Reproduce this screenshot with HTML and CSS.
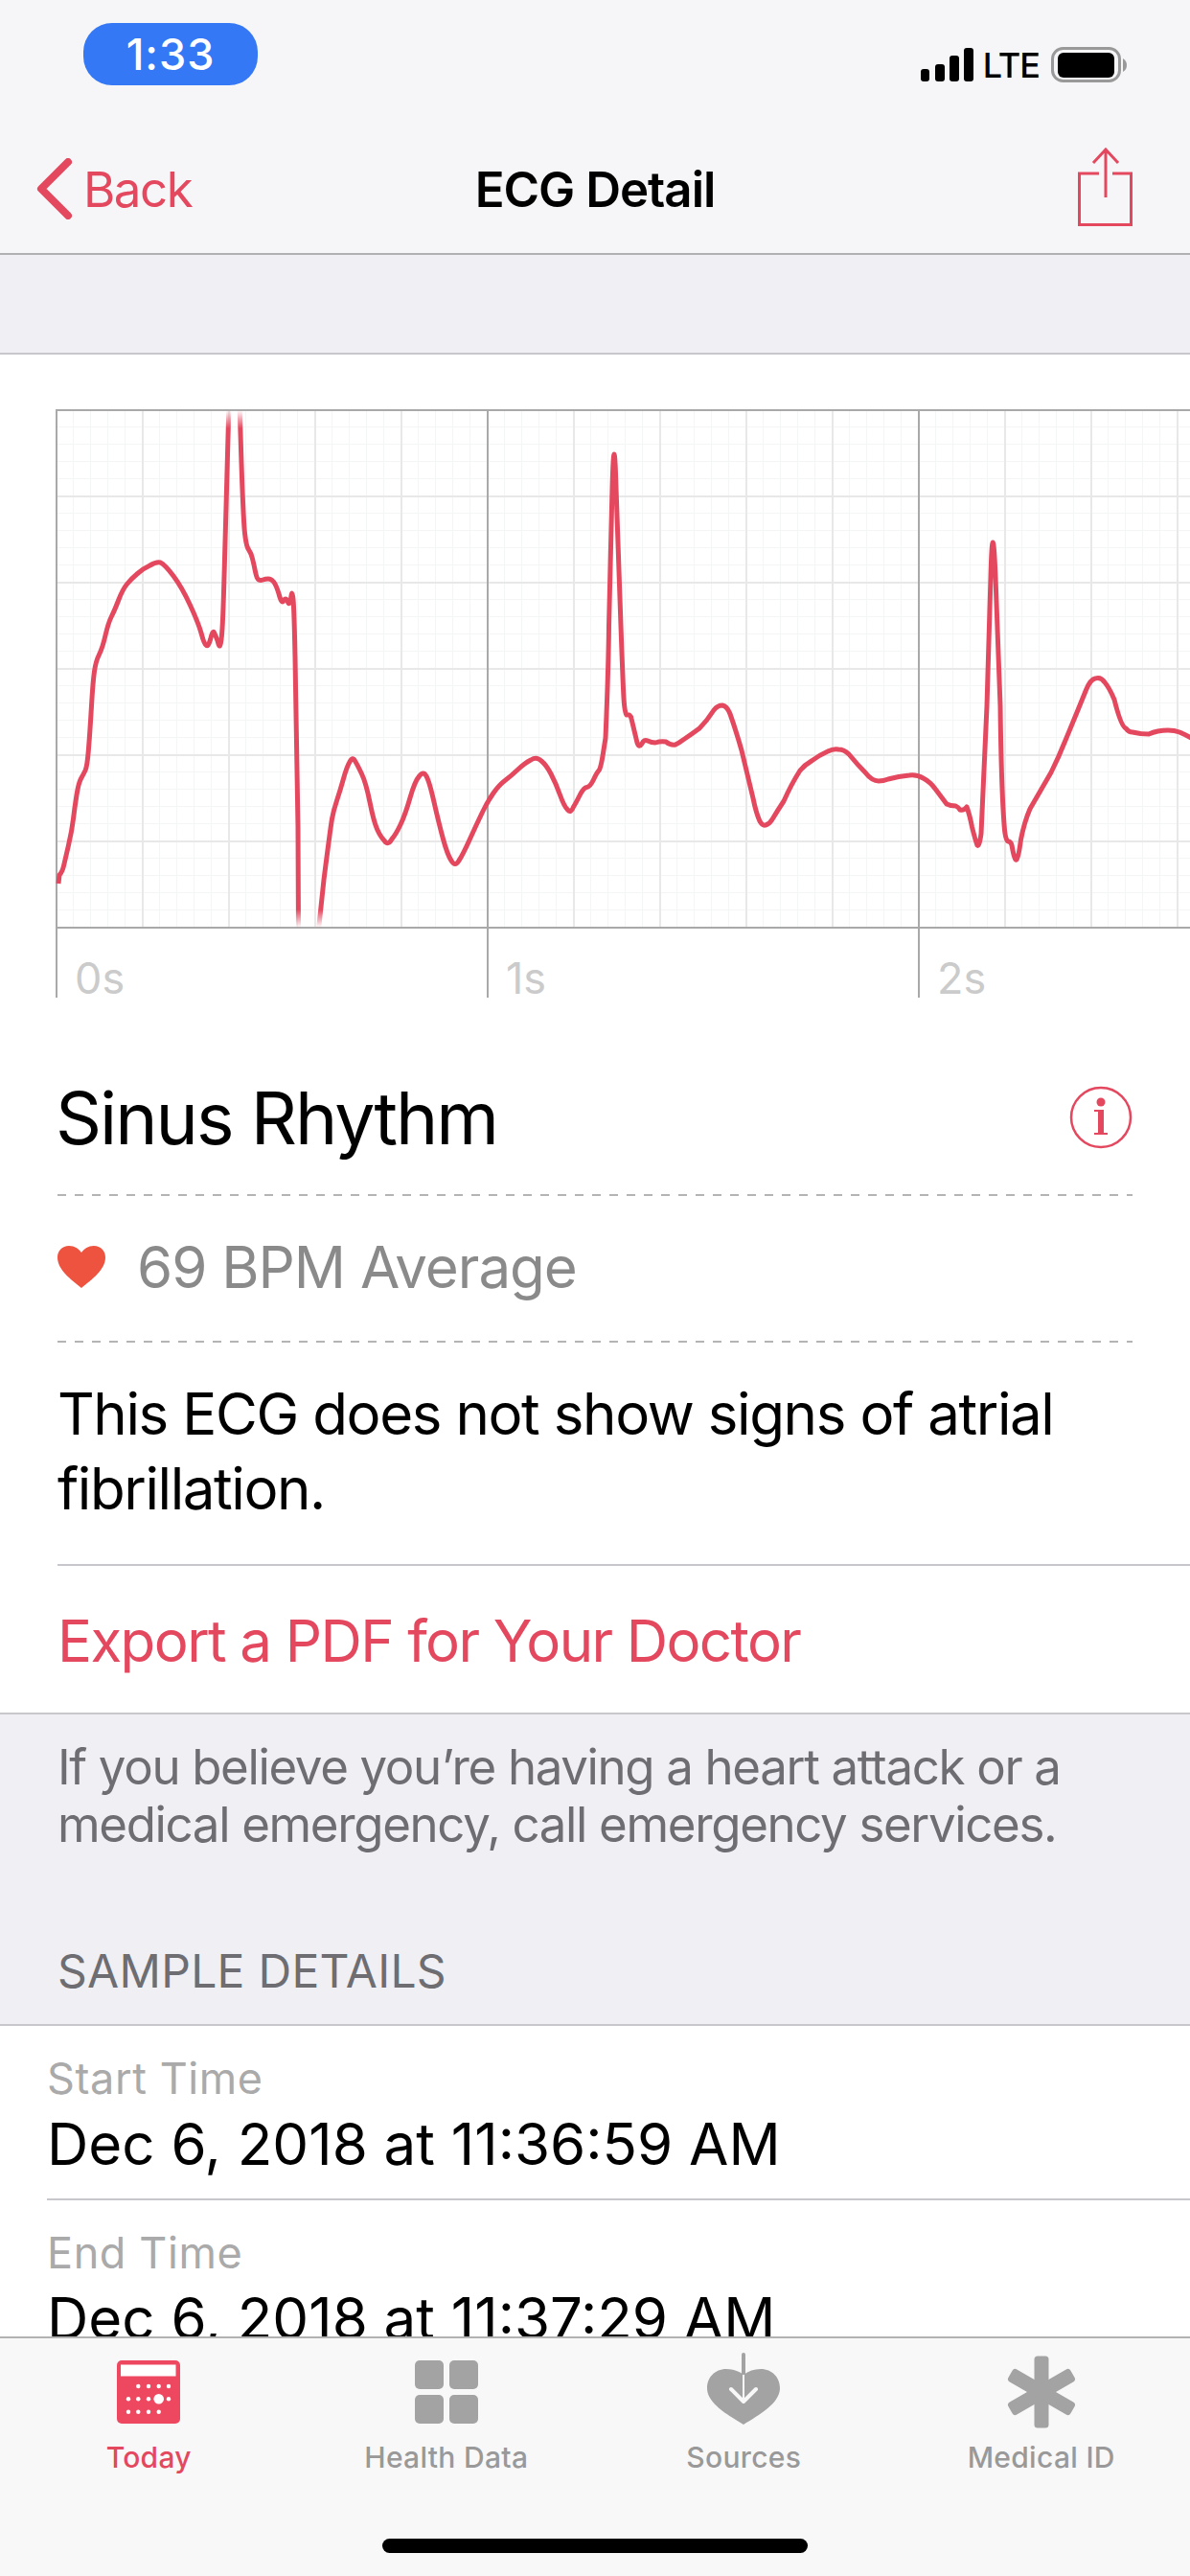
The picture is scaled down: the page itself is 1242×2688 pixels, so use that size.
FILE: index.html
```html
<!DOCTYPE html>
<html lang="en">
<head>
    <meta charset="UTF-8">
    <meta name="viewport" content="width=device-width, initial-scale=1.0">
    <link rel="stylesheet" href="styles.css">
    <title>ECG Detail</title>
</head>
<body>
    <div class="screen">
        <header class="top">
            <div class="status">
                <div class="time-pill">1:33</div>
                <div class="status-right">
                    <svg class="signal" width="55" height="35" viewBox="0 0 55 35">
                        <rect x="0" y="22" width="9" height="13" rx="3"/>
                        <rect x="15" y="17" width="10" height="18" rx="3"/>
                        <rect x="30" y="8" width="10" height="27" rx="3"/>
                        <rect x="45" y="0" width="10" height="35" rx="3"/>
                    </svg>
                    <span class="lte">LTE</span>
                    <svg class="battery" width="80" height="37" viewBox="0 0 80 37">
                        <rect x="1.5" y="1.5" width="70" height="34" rx="11" fill="none" stroke="#999" stroke-width="3"/>
                        <rect x="7" y="6" width="59" height="26" rx="6" fill="#000"/>
                        <path d="M75 12c3 2 4 4 4 7s-1 5-4 7z" fill="#999"/>
                    </svg>
                </div>
            </div>
            <nav class="nav">
                <a class="back">
                    <svg width="38" height="64" viewBox="0 0 38 64">
                        <path d="M33 4 5 32l28 28" fill="none" stroke="#e4485f" stroke-width="8" stroke-linecap="round" stroke-linejoin="round"/>
                    </svg>
                    <span>Back</span>
                </a>
                <div class="nav-title">ECG Detail</div>
                <svg class="share" width="57" height="82" viewBox="0 0 57 82">
                    <path d="M22 27H1.5v53.5h54V27H36" fill="none" stroke="#e4485f" stroke-width="3"/>
                    <path d="M29 2v50M16 16 29 2l13 14" fill="none" stroke="#e4485f" stroke-width="3"/>
                </svg>
            </nav>
        </header>
        <div class="band"></div>

        <section class="card">
            <div class="chart">
                <div class="plot">
                    <svg class="trace" width="1184" height="542" viewBox="58 427 1184 542">
                        <defs>
                            <linearGradient id="edgeFade" gradientUnits="userSpaceOnUse" x1="0" y1="428" x2="0" y2="968">
                                <stop offset="0" stop-color="#000"/>
                                <stop offset="0.035" stop-color="#fff"/>
                                <stop offset="0.965" stop-color="#fff"/>
                                <stop offset="1" stop-color="#000"/>
                            </linearGradient>
                            <mask id="edgeMask" maskUnits="userSpaceOnUse" x="58" y="427" width="1184" height="542">
                                <rect x="58" y="427" width="1184" height="542" fill="url(#edgeFade)"/>
                            </mask>
                        </defs>
                        <g mask="url(#edgeMask)" fill="none" stroke="#e4485f" stroke-width="5" stroke-linejoin="round" stroke-linecap="butt">
                            <path d="M61,922 L62,913 Q65,910 66.5,903.5 Q68,897 71.5,882 Q75,867 76.5,854.5 Q78,842 80,829.5 Q82,817 84.5,812.5 Q87,808 89,804 Q91,800 92.5,781 Q94,762 95.5,736.5 Q97,711 98.5,700.5 Q100,690 103.5,683 Q107,676 110,663 Q113,650 116.5,643 Q120,636 124,625.5 Q128,615 132.5,609.5 Q137,604 143.5,598.5 Q150,593 156.5,590 Q163,586 167.5,587 Q172,589 181,601 Q190,613 198.5,631.5 Q207,650 210,660.5 Q213,672 215,673 Q217,676 219.5,667.5 Q222,657 223.5,660 Q225,663 227,668.5 Q229,677 230,672.5 Q231,671 232,655.5 Q233,640 234.5,583 Q236,526 239,420"/>
                            <path d="M250,420 L252,484 Q254,543 255.5,556.5 Q257,570 259.5,573.5 Q262,577 263.5,583 Q265,589 266.5,596.5 Q268,604 270,605 Q272,606 274.5,605 Q277,604 280,604 Q283,604 285.5,607 Q288,610 291,619.5 Q294,631 296,627 Q298,623 300,627 Q302,633 303.5,625 Q305,613 306,625.5 Q307,636 308,686.5 L311,863 L311.5,975"/>
                            <path d="M332,975 L338,918 Q345,863 346.5,854.5 Q348,846 351.5,835.5 Q355,825 358.5,812.5 Q362,800 365,795 Q368,789 370.5,794 Q373,798 377.5,807.5 Q382,817 386,837 Q390,857 393.5,865 Q397,873 401,877 Q405,883 409,875.5 Q413,871 418,860.5 Q423,850 428,832.5 Q433,815 437.5,810 Q442,804 445,810 Q448,815 453,837 Q458,859 462.5,875.5 Q467,892 471,898 Q475,905 479,898 Q483,892 490,876.5 Q497,861 503,848.5 Q509,836 515,827.5 Q521,819 527,814.5 Q533,810 540.5,803 Q548,796 554,793 Q560,789 565,794 Q570,798 575,807.5 Q580,817 584.5,829.5 Q589,842 592.5,845 Q596,849 598.5,842 Q601,838 605,830 Q609,822 612.5,821.5 Q616,821 619.5,813.5 Q623,806 625,804 Q627,802 629.5,786 L632,770 Q635,700 635.5,653 L639,509 Q641,439 643,509 L648,653 Q650,710 651,728 Q652,745 654,746 Q658,745 659,750 L665,775 Q667,781 670,776 Q672,771 676,773 Q680,775 684,775 Q690,773 695,774 Q700,778 705,777 Q709,775 713,772 Q722,766 730,760 Q738,752 745,741 Q749,736 754,736 Q759,737 762,745 Q768,762 774,783 Q780,808 786,833 Q789,848 793,857 Q796,862 799,861 Q803,860 806,855 Q812,845 818,836 Q826,818 835,804 Q840,798 847,794 Q855,788 864,784 Q870,781 875,782 Q881,782 886,787 Q895,798 903,806 Q910,815 917,815 Q922,815 927,813 Q938,810 949,809 Q957,808 963.5,812 Q971,816 976,823 Q982,831 988,839 Q992,841 997.5,841 Q1000,842 1002,845 Q1006,846 1009,842 Q1012,850 1014.5,863 Q1018,877 1020,882 Q1022,884 1024,870 L1030,737 L1034,602 Q1036,530 1039,602 L1044,737 Q1045,820 1048,860 Q1049,876 1052,878 Q1055,878 1056,882 Q1059,899 1061,897 Q1063,895 1065.5,876 Q1069,858 1075,844 Q1086,825 1097,806 Q1105,790 1112,772.5 Q1123,746 1133.5,720 Q1138,709 1143,708 Q1149,706 1153,712 Q1158,718 1163,730 Q1170,758 1175,760 Q1178,764 1182,764 Q1190,766 1199,766 Q1208,762 1219,762 Q1226,762 1231,764 Q1238,767 1245,771"/>
                        </g>
                    </svg>
                </div>
                <div class="ticks">
                    <div class="tick">0s</div>
                    <div class="tick">1s</div>
                    <div class="tick">2s</div>
                </div>
            </div>

            <div class="result">
                <div class="result-row rhythm">
                    <h1>Sinus Rhythm</h1>
                    <svg class="info" width="66" height="66" viewBox="0 0 66 66">
                        <circle cx="33" cy="33" r="31" fill="none" stroke="#e4485f" stroke-width="2.5"/>
                        <g fill="#e4485f">
                            <circle cx="33" cy="17" r="4.5"/>
                            <path d="M26 25h10v24h4v2H26v-2h4V27h-4z"/>
                        </g>
                    </svg>
                </div>
                <div class="result-row bpm">
                    <svg width="50" height="44" viewBox="0 0 50 44">
                        <path d="M25 44C14 35 0 25 0 12 0 5 5 0 12 0c6 0 10 3 13 7 3-4 7-7 13-7 7 0 12 5 12 12 0 13-14 23-25 32z" fill="#ee5340"/>
                    </svg>
                    <span>69 BPM Average</span>
                </div>
                <p class="summary">This ECG does not show signs of atrial fibrillation.</p>
            </div>
            <div class="export"><a>Export a PDF for Your Doctor</a></div>
        </section>

        <p class="note">If you believe you’re having a heart attack or a medical emergency, call emergency services.</p>
        <h2 class="section-title">SAMPLE DETAILS</h2>

        <section class="details">
            <div class="detail">
                <div class="detail-label">Start Time</div>
                <div class="detail-value">Dec 6, 2018 at 11:36:59 AM</div>
            </div>
            <div class="detail">
                <div class="detail-label">End Time</div>
                <div class="detail-value">Dec 6, 2018 at 11:37:29 AM</div>
            </div>
        </section>

        <footer class="tabbar">
            <div class="tabs">
                <a class="tab active">
                    <div class="tab-icon">
                        <svg width="66" height="66" viewBox="0 0 66 66">
                            <rect width="66" height="66" rx="5" fill="#ee4760"/>
                            <rect x="4" y="4.5" width="57.5" height="12" fill="#fff"/>
                            <g fill="#fff">
                                <circle cx="22.3" cy="27" r="2.2"/><circle cx="33" cy="27" r="2.2"/><circle cx="43.7" cy="27" r="2.2"/><circle cx="54" cy="27" r="2.2"/>
                                <circle cx="12" cy="40.3" r="2.2"/><circle cx="22.3" cy="40.3" r="2.2"/><circle cx="33" cy="40.3" r="2.2"/><circle cx="43.7" cy="40.3" r="5.3"/><circle cx="54" cy="40.3" r="2.2"/>
                                <circle cx="12" cy="53.7" r="2.2"/><circle cx="22.3" cy="53.7" r="2.2"/><circle cx="33" cy="53.7" r="2.2"/><circle cx="43.7" cy="53.7" r="2.2"/>
                            </g>
                        </svg>
                    </div>
                    <span>Today</span>
                </a>
                <a class="tab">
                    <div class="tab-icon">
                        <svg width="66" height="66" viewBox="0 0 66 66" fill="#a3a3a3">
                            <rect x="0" y="0" width="30" height="30" rx="5"/>
                            <rect x="36" y="0" width="30" height="30" rx="5"/>
                            <rect x="0" y="36" width="30" height="30" rx="5"/>
                            <rect x="36" y="36" width="30" height="30" rx="5"/>
                        </svg>
                    </div>
                    <span>Health Data</span>
                </a>
                <a class="tab">
                    <div class="tab-icon">
                        <svg width="76" height="82" viewBox="0 0 76 82">
                            <path fill="#a3a3a3" d="M38 23C33 19 27 17 20 17 8 17 0 26 0 37 0 53 22 65 38 75 54 65 76 53 76 37 76 26 68 17 56 17 49 17 43 19 38 23z"/>
                            <rect x="36" y="0" width="4" height="24" rx="2" fill="#a3a3a3"/>
                            <path d="M38 23v28" fill="none" stroke="#f8f8f8" stroke-width="2"/>
                            <path d="M25 38l13 13 13-13" fill="none" stroke="#f8f8f8" stroke-width="4" stroke-linecap="round" stroke-linejoin="round"/>
                        </svg>
                    </div>
                    <span>Sources</span>
                </a>
                <a class="tab">
                    <div class="tab-icon">
                        <svg width="72" height="76" viewBox="-36 -38 72 76" fill="#a3a3a3">
                            <rect x="-7.5" y="-37.5" width="15" height="75" rx="3.5"/>
                            <rect x="-7.5" y="-37.5" width="15" height="75" rx="3.5" transform="rotate(60)"/>
                            <rect x="-7.5" y="-37.5" width="15" height="75" rx="3.5" transform="rotate(-60)"/>
                        </svg>
                    </div>
                    <span>Medical ID</span>
                </a>
            </div>
            <div class="home-bar"></div>
        </footer>
    </div>
</body>
</html>
```

FILE: styles.css
```css
* {
    box-sizing: border-box;
}

body {
    margin: 0;
    font-family: Inter, "Liberation Sans", sans-serif;
    color: #000;
}

h1,
h2,
p {
    margin: 0;
    font-weight: normal;
}

.screen {
    position: relative;
    width: 1242px;
    height: 2688px;
    overflow: hidden;
    background-color: #efeff4;
}

.top {
    height: 266px;
    background-color: #f6f6f8;
    border-bottom: 2px solid #b0b0b2;
}

.status {
    display: flex;
    justify-content: space-between;
    align-items: flex-start;
    padding: 24px 65px 0 87px;
    height: 130px;
}

.time-pill {
    width: 182px;
    height: 65px;
    border-radius: 30px;
    background-color: #3478f6;
    color: white;
    font-size: 45px;
    font-weight: 500;
    letter-spacing: 1px;
    line-height: 65px;
    text-align: center;
}

.status-right {
    display: flex;
    align-items: center;
    height: 37px;
    margin-top: 25px;
}

.signal {
    margin-right: 10px;
}

.battery {
    margin-left: 12px;
}

.lte {
    font-size: 36px;
    font-weight: 500;
    letter-spacing: -1px;
}

.nav {
    display: grid;
    grid-template-columns: 1fr auto 1fr;
    align-items: center;
    padding: 0 38px;
    height: 134px;
}

.back {
    display: flex;
    align-items: center;
    gap: 11px;
    color: #e4485f;
    font-size: 51px;
    letter-spacing: -1.5px;
}

.nav-title {
    font-size: 51px;
    font-weight: 600;
    letter-spacing: -1px;
}

.share {
    justify-self: end;
    margin: -4px 22px 0 0;
}

.band {
    height: 104px;
    border-bottom: 2px solid #c8c8cc;
}

.card {
    background-color: white;
    border-bottom: 2px solid #c8c8cc;
}

.chart {
    padding: 57px 0 0 58px;
}

.plot {
    position: relative;
    height: 542px;
    border-top: 2px solid #a9a9a9;
    border-bottom: 2px solid #a9a9a9;
    background-image:
        linear-gradient(to right, #a9a9a9 2px, transparent 2px),
        linear-gradient(to right, #e8e8e8 2px, transparent 2px),
        linear-gradient(to bottom, #e8e8e8 2px, transparent 2px),
        linear-gradient(to right, #f4f5f5 1px, transparent 1px),
        linear-gradient(to bottom, #f4f5f5 1px, transparent 1px);
    background-size: 450px 100%, 90px 100%, 100% 90px, 18px 100%, 100% 18px;
    background-position: 0 0, 0 0, 0 -2px, 0 0, 0 -2px;
}

.trace {
    position: absolute;
    left: 0;
    top: -2px;
}

.ticks {
    display: flex;
    height: 72px;
}

.tick {
    flex: 0 0 450px;
    border-left: 2px solid #a9a9a9;
    padding: 24px 0 0 18px;
    color: #cbcbcb;
    font-size: 45px;
}

.result {
    padding: 0 60px;
}

.result-row {
    display: flex;
    align-items: center;
    background: linear-gradient(to right, #b4b4b4 50%, transparent 50%) left bottom / 18px 2px repeat-x;
}

.rhythm {
    justify-content: space-between;
    height: 207px;
    padding-top: 43px;
}

.rhythm h1 {
    margin-left: -2px;
    font-size: 75px;
    letter-spacing: -2px;
}

.bpm {
    gap: 33px;
    height: 153px;
    padding-bottom: 6px;
    color: #8a8a8a;
    font-size: 60px;
    letter-spacing: -1px;
}

.summary {
    padding: 35px 0 40px;
    font-size: 60px;
    line-height: 78px;
    letter-spacing: -1.4px;
}

.export {
    margin-left: 60px;
    height: 155px;
    border-top: 2px solid #c8c8cc;
    color: #e4485f;
    font-size: 60px;
    line-height: 156px;
    letter-spacing: -1.6px;
}

.note {
    padding: 25px 60px 0;
    color: #6d6d72;
    font-size: 51px;
    line-height: 60px;
    letter-spacing: -1.35px;
}

.section-title {
    padding: 88px 60px 0;
    height: 178px;
    color: #6d6d72;
    font-size: 48px;
    line-height: 70px;
    letter-spacing: 0.3px;
}

.details {
    background-color: white;
    border-top: 2px solid #c8c8cc;
    height: 400px;
}

.detail {
    margin-left: 49px;
    height: 182px;
    padding-top: 25px;
    border-bottom: 2px solid #c8c8cc;
}

.detail-label {
    color: #aaaaaa;
    font-size: 45px;
    line-height: 60px;
    letter-spacing: 0.6px;
}

.detail-value {
    font-size: 60px;
    line-height: 76px;
}

.tabbar {
    position: absolute;
    left: 0;
    right: 0;
    bottom: 0;
    height: 250px;
    background-color: #f8f8f8;
    border-top: 2px solid #b2b2b2;
}

.tabs {
    display: grid;
    grid-template-columns: repeat(4, 1fr);
    height: 209px;
}

.tab {
    display: flex;
    flex-direction: column;
    align-items: center;
    padding-top: 23px;
    color: #999;
    font-size: 30px;
    font-weight: 500;
    letter-spacing: 0.3px;
}

.tab.active {
    color: #e4485f;
}

.tab-icon {
    display: flex;
    align-items: center;
    justify-content: center;
    height: 66px;
    margin-bottom: 17px;
}

.home-bar {
    width: 444px;
    height: 15px;
    margin: 0 auto;
    border-radius: 8px;
    background-color: black;
}
```
